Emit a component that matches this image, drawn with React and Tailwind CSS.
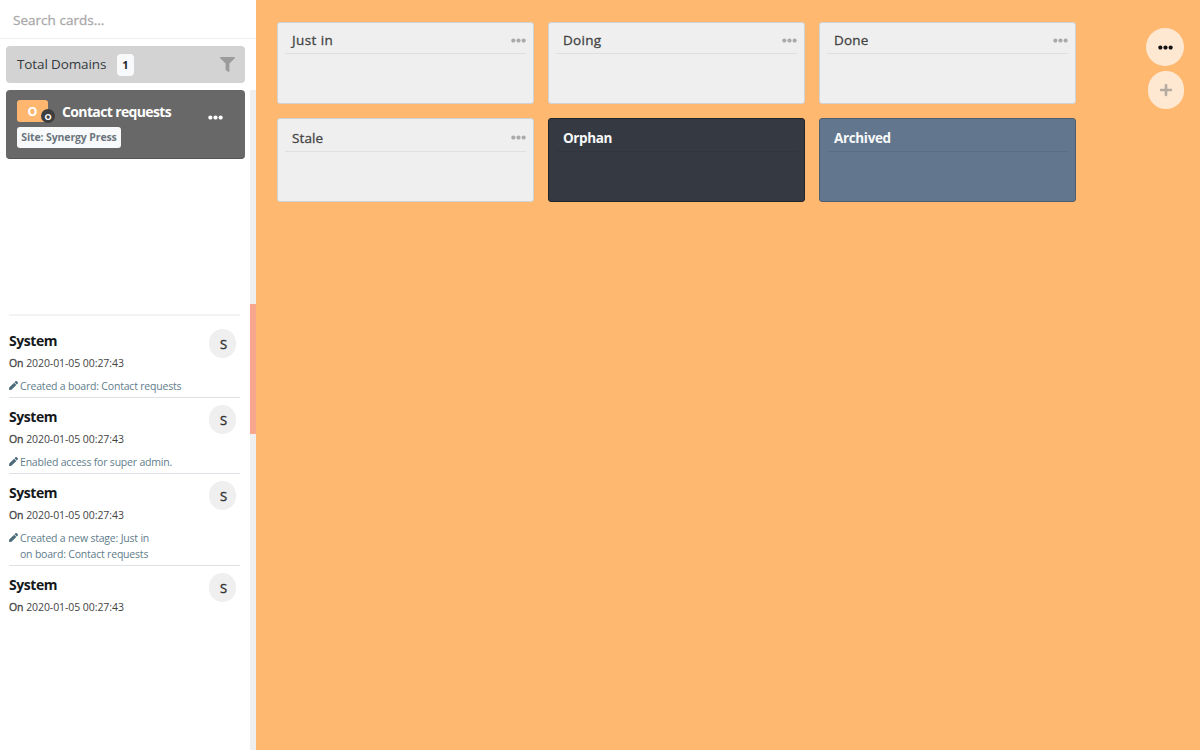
import React from "react";
import { FaEllipsisH, FaFilter, FaPen, FaPlus } from "react-icons/fa";

const stages = [
  { name: "Just in", tracking: "tracking-[0.42px]", tone: "light", header: "h-[31px] pt-[4px]" },
  { name: "Doing", tracking: "tracking-[0.3px]", tone: "light", header: "h-[31px] pt-[4px]" },
  { name: "Done", tracking: "tracking-[0.15px]", tone: "light", header: "h-[31px] pt-[4px]" },
  { name: "Stale", tracking: "tracking-[0.1px]", tone: "light", header: "h-[33px] pt-[5px]" },
  { name: "Orphan", tracking: "tracking-[-0.4px]", tone: "dark", header: "h-[33px] pt-[6px]" },
  { name: "Archived", tracking: "tracking-[-0.35px]", tone: "blue", header: "h-[33px] pt-[6px]" },
];

const tones = {
  light: { card: "bg-[#efefef] border-[#d0d3d6]", line: "border-[#dfdfdf]", text: "font-normal [-webkit-text-stroke:0.3px_#444] text-[#444]" },
  dark: { card: "bg-[#353941] border-[#20242a]", line: "border-[#31353d]", text: "font-bold text-[#f8f9fa]" },
  blue: { card: "bg-[#62778d] border-[#4d5e70]", line: "border-[#5b6f84]", text: "font-bold text-[#f8f9fa]" },
};

const activity = [
  { lines: ["Created a board: Contact requests"], height: "h-[76px]" },
  { lines: ["Enabled access for super admin."], height: "h-[76px]" },
  { lines: ["Created a new stage: Just in", "on board: Contact requests"], height: "h-[92px]" },
  { lines: [], height: "h-[60px]" },
];

function Stage({ stage }) {
  const tone = tones[stage.tone];
  return (
    <section className={`h-full rounded-[3px] border px-[7px] ${tone.card}`}>
      <header className={`flex items-center justify-between border-b pl-[7px] ${stage.header} ${tone.line}`}>
        <h2 className={`text-[13.5px] leading-[20px] whitespace-nowrap ${stage.tracking} ${tone.text}`}>{stage.name}</h2>
        {stage.tone === "light" && <FaEllipsisH className="size-[15px] text-[#aaa]" />}
      </header>
    </section>
  );
}

function Activity({ item, last }) {
  return (
    <li className={`flex justify-between ${item.height} ${last ? "" : "border-b border-[#dee2e6]"}`}>
      <div className="whitespace-nowrap">
        <h3 className="mt-[9px] text-[14px] leading-[20px] font-bold tracking-[-0.45px] text-[#16191c]">System</h3>
        <p className="mt-[4px] text-[10.5px] leading-[16px] tracking-[-0.07px] text-[#444]">
          <span className="[-webkit-text-stroke:0.3px_#444]">On</span> 2020-01-05 00:27:43
        </p>
        {item.lines.length > 0 && (
          <div className="mt-[7px] flex text-[10.5px] leading-[16px] tracking-[-0.2px] text-[#5f7d8c]">
            <FaPen className="mt-[3px] mr-[2px] size-[9px] text-[#4b6b7b]" />
            <div>
              {item.lines.map((line) => (
                <p key={line}>{line}</p>
              ))}
            </div>
          </div>
        )}
      </div>
      <div className="mt-[7px] mr-[4px] flex h-[29px] w-[27px] items-center justify-center rounded-full bg-[#efefef] pt-[2px] pl-[2px] text-[13px] text-[#333] [-webkit-text-stroke:0.4px_#333]">
        S
      </div>
    </li>
  );
}

function Sidebar() {
  return (
    <aside className="flex h-full w-[256px] shrink-0 flex-col bg-white">
      <div className="flex h-[39px] shrink-0 items-center border-b border-[#eeeeee] pt-[2px] pl-[13px] text-[13.5px] tracking-[0.02px] text-[#a9a9a9] [-webkit-text-stroke:0.3px_#a9a9a9]">
        Search cards...
      </div>
      <div className="mt-[7px] mr-[11px] ml-[6px] flex h-[37px] shrink-0 items-center rounded-[4px] bg-[#d3d3d3] pr-[10px] pl-[11px]">
        <span className="w-[100px] text-[13.5px] tracking-[-0.12px] whitespace-nowrap text-[#343a40]">Total Domains</span>
        <span className="flex h-[22px] w-[17px] items-center justify-center rounded-[4px] bg-[#f8f9fa] pt-[1px] text-[11px] font-bold text-[#212529]">1</span>
        <FaFilter className="ml-auto size-[15px] text-[#9b9b9b]" />
      </div>
      <div className="mt-[7px] flex min-h-0 grow">
        <div className="w-[250px]">
          <div className="ml-[6px] flex h-[69px] w-[239px] flex-col rounded-[4px] border-b border-[#555] bg-[#686868] pt-[10px] pl-[11px]">
            <div className="flex h-[27px]">
              <div className="relative h-[22px] w-[31px] rounded-[3px] bg-[#ffb770] text-center text-[12.5px] leading-[24px] font-bold text-white">
                O
                <span className="absolute top-[9px] left-[24px] size-[14px] rounded-full bg-[#3e3e3e] text-center text-[9px] leading-[15px] font-bold text-white">O</span>
              </div>
              <span className="ml-[14px] w-[146px] text-[14px] leading-[23px] font-bold tracking-[-0.63px] whitespace-nowrap text-white">Contact requests</span>
              <FaEllipsisH className="mt-[10px] size-[15px] text-white" />
            </div>
            <span className="flex h-[21px] w-[104px] items-center justify-center rounded-[3px] bg-[#f8f9fa] pt-[1px] text-[10.5px] font-bold tracking-[-0.12px] whitespace-nowrap text-[#6c757d]">
              Site: Synergy Press
            </span>
          </div>
          <ul className="mt-[155px] ml-[9px] w-[231px] border-t-2 border-[#f3f3f3] pt-[6px]">
            {activity.map((item, i) => (
              <Activity key={i} item={item} last={i === activity.length - 1} />
            ))}
          </ul>
        </div>
        <div className="w-[6px] bg-[#efefef] pt-[214px]">
          <div className="h-[130px] bg-[#f7a78d]" />
        </div>
      </div>
    </aside>
  );
}

export default function App() {
  return (
    <div className="flex h-[750px] w-[1200px] overflow-hidden bg-[#ffb870] [font-family:'Open_Sans','Noto_Sans',sans-serif]">
      <Sidebar />
      <main className="flex grow items-start justify-between pt-[22px] pr-[16px] pl-[21px]">
        <div className="grid w-[799px] grid-cols-3 grid-rows-[82px_84px] gap-x-[14px] gap-y-[14px]">
          {stages.map((stage) => (
            <Stage key={stage.name} stage={stage} />
          ))}
        </div>
        <div className="mt-[6px] flex flex-col items-end gap-[5px]">
          <button className="flex size-[38px] items-center justify-center rounded-full bg-[#fee8d2]">
            <FaEllipsisH className="size-[15px] text-[#111]" />
          </button>
          <button className="flex h-[38px] w-[36px] items-center justify-center rounded-full bg-[#fee8d2]">
            <FaPlus className="size-[14px] text-[#b4aba2]" />
          </button>
        </div>
      </main>
    </div>
  );
}
